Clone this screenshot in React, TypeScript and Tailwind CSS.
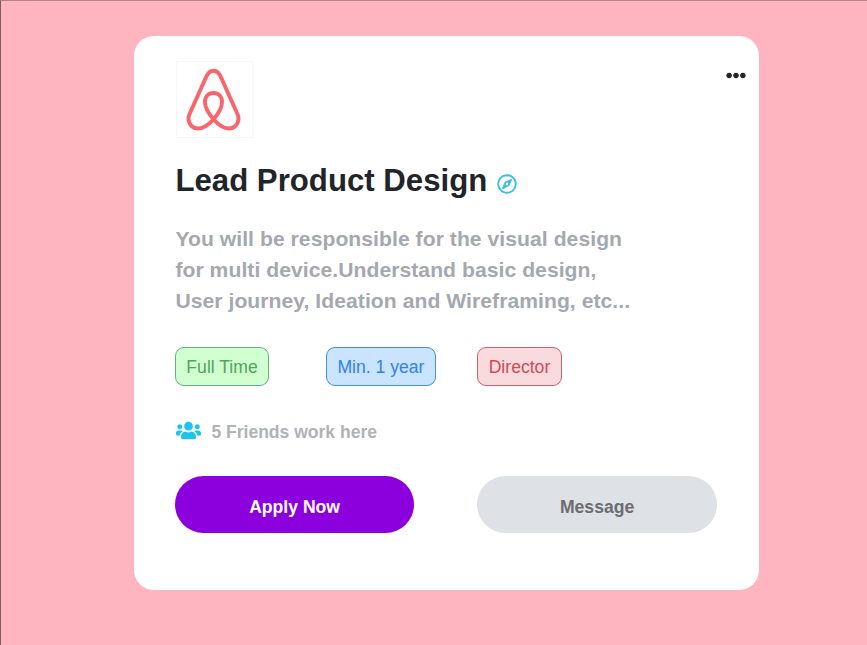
import type { ReactNode } from "react";
import { FaEllipsisH, FaRegCompass, FaUsers } from "react-icons/fa";

function Logo() {
  return (
    <div className="ml-[0.600px] flex h-[77px] w-[77px] items-center justify-center border border-[#f7f7f7]">
      <svg width="75" height="75" viewBox="0 0 75 75" fill="none" stroke="#f8656b" strokeWidth="3.9" strokeLinejoin="round">
        <path d="M36.500 57.300C31 51 28 45 28 40C28 34.500 31.500 31 36.500 31C41.500 31 45 34.500 45 40C45 45 42 51 36.500 57.300C31 63.500 26 66.500 21.300 66.500C15.500 66.500 11.500 62 11.500 56.500C11.500 54.500 12 53 13 51L28 17.500C30.300 12.200 32 8.800 36.500 8.800C41 8.800 42.700 12.200 45 17.500L60 51C61 53 61.500 54.500 61.500 56.500C61.500 62 57.500 66.500 51.700 66.500C47 66.500 42 63.500 36.500 57.300Z" />
      </svg>
    </div>
  );
}

function Tag({ className, children }: { className: string; children: ReactNode }) {
  return (
    <span className={`flex h-[39px] items-center justify-center rounded-[9px] border pt-0.5 text-[17.600px] ${className}`}>
      {children}
    </span>
  );
}

export default function App() {
  return (
    <main className="h-[645px] w-[867px] border-t border-l border-t-[#b77f88] border-l-[#80585e] bg-[#ffb5c0] pt-[35.400px] pl-[133.400px] font-['Liberation_Sans',Arial,sans-serif]">
      <article className="h-[553.600px] w-[625px] rounded-[20px] bg-white pt-[24.600px] pl-[41px]">
        <header className="flex items-start justify-between pr-[13.400px]">
          <Logo />
          <FaEllipsisH className="mt-1 h-[21px] w-[20px] text-[#212529]" />
        </header>

        <div className="mt-[24px] flex h-[38px] items-center">
          <h1 className="text-[31.200px] font-bold whitespace-nowrap text-[#212529]">Lead Product Design</h1>
          <FaRegCompass className="mt-[6px] ml-[9.200px] h-5 w-5 text-[#3abfe4]" />
        </div>

        <p className="mt-[23px] text-[21.120px] leading-[31px] font-bold tracking-[0.055px] whitespace-nowrap text-[#a2a9b0]">
          You will be responsible for the visual design
          <br />
          for multi device.Understand basic design,
          <br />
          User journey, Ideation and Wireframing, etc...
        </p>

        <div className="mt-[31px] flex">
          <Tag className="w-[93.300px] border-[#64b478] bg-[#d2ffd2] text-[#4ca65c]">Full Time</Tag>
          <Tag className="ml-[57.700px] w-[109.200px] border-[#4490db] bg-[#cae4ff] text-[#2e82ef]">Min. 1 year</Tag>
          <Tag className="ml-[41.800px] w-[84.200px] border-[#cc626d] bg-[#f9dadd] text-[#d14b57]">Director</Tag>
        </div>

        <div className="mt-[33px] flex h-6 items-center">
          <FaUsers className="-mt-px ml-[0.300px] h-[25px] w-[25px] text-[#1fc3ef]" />
          <span className="mt-[3px] ml-[10.700px] text-[17.550px] font-bold whitespace-nowrap text-[#adb3b9]">5 Friends work here</span>
        </div>

        <div className="mt-[33px] flex gap-[63.600px]">
          <button className="h-[57px] w-[238.400px] rounded-full bg-[#8c00de] pt-1.5 text-[17.600px] font-bold text-white">Apply Now</button>
          <button className="h-[57px] w-[239.400px] rounded-full bg-[#dee1e6] pt-1.5 text-[17.600px] font-bold text-[#6b6d6f]">Message</button>
        </div>
      </article>
    </main>
  );
}
